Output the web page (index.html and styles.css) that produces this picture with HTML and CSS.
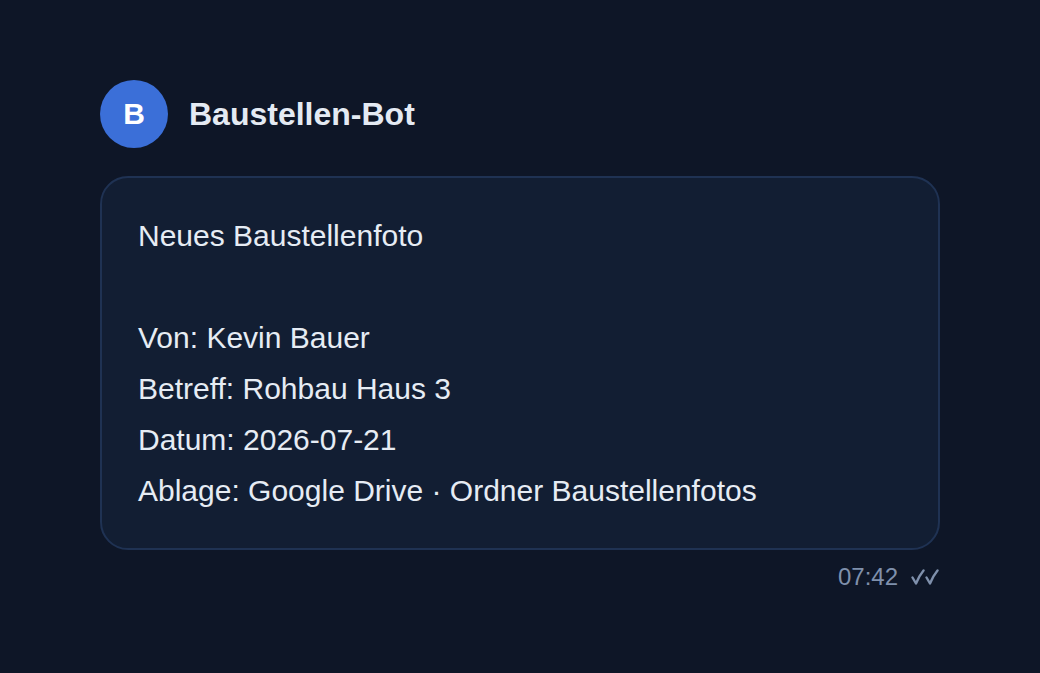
FILE: index.html
```html
<!DOCTYPE html>
<html lang="de">
<head>
<meta charset="utf-8">
<title>Baustellen-Bot</title>
<link rel="stylesheet" href="styles.css">
</head>
<body>
<main class="chat">
  <header class="sender">
    <div class="avatar">B</div>
    <div class="name">Baustellen-Bot</div>
  </header>
  <div class="bubble">
    <p class="line">Neues Baustellenfoto</p>
    <p class="line blank">&nbsp;</p>
    <p class="line">Von: Kevin Bauer</p>
    <p class="line">Betreff: Rohbau Haus 3</p>
    <p class="line">Datum: 2026-07-21</p>
    <p class="line">Ablage: Google Drive · Ordner Baustellenfotos</p>
  </div>
  <div class="meta">
    <span class="time">07:42</span>
    <svg class="ticks" width="28" height="16" viewBox="0 0 28 16" aria-label="gelesen">
      <path d="M1.5 8.5 L5 14.5 Q8 7 12.5 1.5" />
      <path d="M15.5 8.5 L19 14.5 Q22 7 26.5 1.5" />
    </svg>
  </div>
</main>
</body>
</html>
```

FILE: styles.css
```css
html, body {
  margin: 0;
  padding: 0;
  background: #0e1627;
  height: 100%;
}
body {
  font-family: "Liberation Sans", Arial, sans-serif;
  color: #e2e8f0;
}
.chat {
  padding: 80px 100px 0 100px;
  width: 840px;
}
.sender {
  display: flex;
  align-items: center;
  gap: 21px;
  margin-bottom: 28px;
}
.avatar {
  width: 68px;
  height: 68px;
  border-radius: 50%;
  background: #3b6fd8;
  color: #ffffff;
  display: flex;
  align-items: center;
  justify-content: center;
  font-weight: 700;
  font-size: 30px;
}
.name {
  font-weight: 700;
  font-size: 32px;
  color: #e4eaf3;
}
.bubble {
  background: #121e33;
  border: 2px solid #1f3253;
  border-radius: 28px;
  padding: 32px 36px;
}
.line {
  margin: 0;
  font-size: 30px;
  line-height: 51px;
  color: #e6ecf4;
}
.meta {
  margin-top: 13px;
  display: flex;
  justify-content: flex-end;
  align-items: center;
  gap: 13px;
  font-size: 24px;
  line-height: 28px;
  color: #7f90ac;
}
.ticks {
  fill: none;
  stroke: #7f90ac;
  stroke-width: 2.4;
  stroke-linecap: round;
  stroke-linejoin: round;
  margin-right: 1px;
}
```
